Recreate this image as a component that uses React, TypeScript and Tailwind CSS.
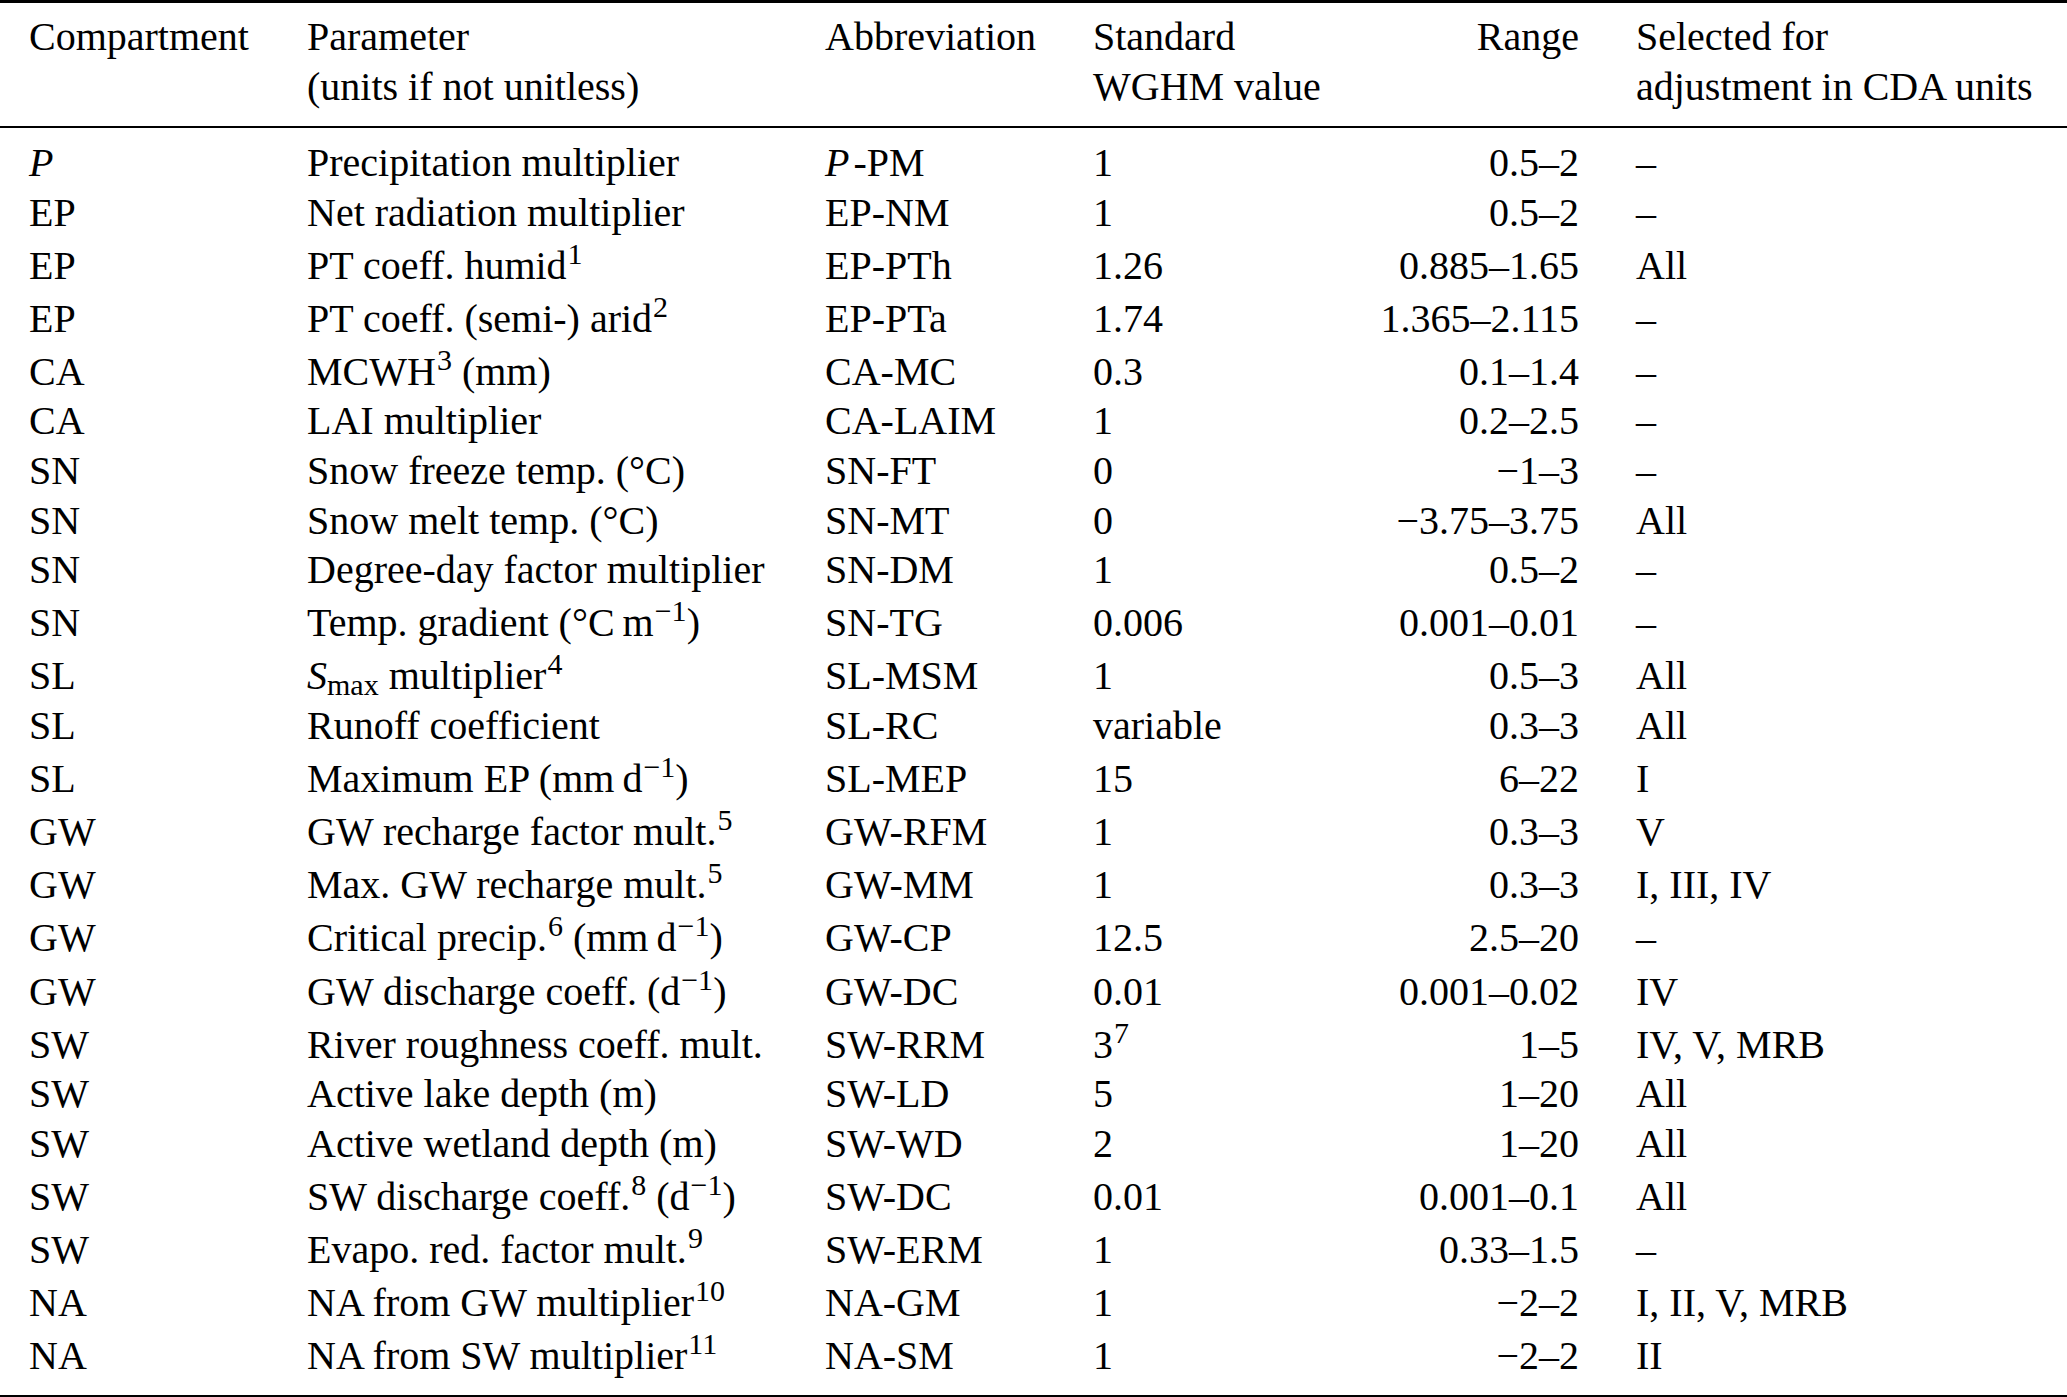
import type { ReactNode } from "react";

type Row = {
  compartment: ReactNode;
  parameter: ReactNode;
  abbreviation: ReactNode;
  standard: ReactNode;
  range: string;
  selected: string;
  tall?: boolean;
};

const cols = "grid grid-cols-[278px_518px_268px_250px_293px_1fr]";

function Sup({ children }: { children: ReactNode }) {
  return <sup className="-top-[15px] pl-[1px] text-[30px]">{children}</sup>;
}

function PerDay() {
  return (
    <>
      (mm{"\u2009"}d<Sup>−1</Sup>)
    </>
  );
}

const rows: Row[] = [
  {
    compartment: <i>P</i>,
    parameter: "Precipitation multiplier",
    abbreviation: (
      <>
        <i className="pr-[4px]">P</i>-PM
      </>
    ),
    standard: "1",
    range: "0.5–2",
    selected: "–"
  },
  { compartment: "EP", parameter: "Net radiation multiplier", abbreviation: "EP-NM", standard: "1", range: "0.5–2", selected: "–" },
  {
    compartment: "EP",
    parameter: (
      <>
        PT coeff. humid<Sup>1</Sup>
      </>
    ),
    abbreviation: "EP-PTh",
    standard: "1.26",
    range: "0.885–1.65",
    selected: "All",
    tall: true
  },
  {
    compartment: "EP",
    parameter: (
      <>
        PT coeff. (semi-) arid<Sup>2</Sup>
      </>
    ),
    abbreviation: "EP-PTa",
    standard: "1.74",
    range: "1.365–2.115",
    selected: "–",
    tall: true
  },
  {
    compartment: "CA",
    parameter: (
      <>
        MCWH<Sup>3</Sup> (mm)
      </>
    ),
    abbreviation: "CA-MC",
    standard: "0.3",
    range: "0.1–1.4",
    selected: "–",
    tall: true
  },
  { compartment: "CA", parameter: "LAI multiplier", abbreviation: "CA-LAIM", standard: "1", range: "0.2–2.5", selected: "–" },
  { compartment: "SN", parameter: "Snow freeze temp. (°C)", abbreviation: "SN-FT", standard: "0", range: "−1–3", selected: "–" },
  { compartment: "SN", parameter: "Snow melt temp. (°C)", abbreviation: "SN-MT", standard: "0", range: "−3.75–3.75", selected: "All" },
  { compartment: "SN", parameter: "Degree-day factor multiplier", abbreviation: "SN-DM", standard: "1", range: "0.5–2", selected: "–" },
  {
    compartment: "SN",
    parameter: (
      <>
        Temp. gradient (°C{"\u2009"}m<Sup>−1</Sup>)
      </>
    ),
    abbreviation: "SN-TG",
    standard: "0.006",
    range: "0.001–0.01",
    selected: "–",
    tall: true
  },
  {
    compartment: "SL",
    parameter: (
      <>
        <i>S</i>
        <sub className="-bottom-[6px] text-[30px]">max</sub> multiplier<Sup>4</Sup>
      </>
    ),
    abbreviation: "SL-MSM",
    standard: "1",
    range: "0.5–3",
    selected: "All",
    tall: true
  },
  { compartment: "SL", parameter: "Runoff coefficient", abbreviation: "SL-RC", standard: "variable", range: "0.3–3", selected: "All" },
  {
    compartment: "SL",
    parameter: (
      <>
        Maximum EP <PerDay />
      </>
    ),
    abbreviation: "SL-MEP",
    standard: "15",
    range: "6–22",
    selected: "I",
    tall: true
  },
  {
    compartment: "GW",
    parameter: (
      <>
        GW recharge factor mult.<Sup>5</Sup>
      </>
    ),
    abbreviation: "GW-RFM",
    standard: "1",
    range: "0.3–3",
    selected: "V",
    tall: true
  },
  {
    compartment: "GW",
    parameter: (
      <>
        Max. GW recharge mult.<Sup>5</Sup>
      </>
    ),
    abbreviation: "GW-MM",
    standard: "1",
    range: "0.3–3",
    selected: "I, III, IV",
    tall: true
  },
  {
    compartment: "GW",
    parameter: (
      <>
        Critical precip.<Sup>6</Sup> <PerDay />
      </>
    ),
    abbreviation: "GW-CP",
    standard: "12.5",
    range: "2.5–20",
    selected: "–",
    tall: true
  },
  {
    compartment: "GW",
    parameter: (
      <>
        GW discharge coeff. (d<Sup>−1</Sup>)
      </>
    ),
    abbreviation: "GW-DC",
    standard: "0.01",
    range: "0.001–0.02",
    selected: "IV",
    tall: true
  },
  {
    compartment: "SW",
    parameter: "River roughness coeff. mult.",
    abbreviation: "SW-RRM",
    standard: (
      <>
        3<Sup>7</Sup>
      </>
    ),
    range: "1–5",
    selected: "IV, V, MRB",
    tall: true
  },
  { compartment: "SW", parameter: "Active lake depth (m)", abbreviation: "SW-LD", standard: "5", range: "1–20", selected: "All" },
  { compartment: "SW", parameter: "Active wetland depth (m)", abbreviation: "SW-WD", standard: "2", range: "1–20", selected: "All" },
  {
    compartment: "SW",
    parameter: (
      <>
        SW discharge coeff.<Sup>8</Sup> (d<Sup>−1</Sup>)
      </>
    ),
    abbreviation: "SW-DC",
    standard: "0.01",
    range: "0.001–0.1",
    selected: "All",
    tall: true
  },
  {
    compartment: "SW",
    parameter: (
      <>
        Evapo. red. factor mult.<Sup>9</Sup>
      </>
    ),
    abbreviation: "SW-ERM",
    standard: "1",
    range: "0.33–1.5",
    selected: "–",
    tall: true
  },
  {
    compartment: "NA",
    parameter: (
      <>
        NA from GW multiplier<Sup>10</Sup>
      </>
    ),
    abbreviation: "NA-GM",
    standard: "1",
    range: "−2–2",
    selected: "I, II, V, MRB",
    tall: true
  },
  {
    compartment: "NA",
    parameter: (
      <>
        NA from SW multiplier<Sup>11</Sup>
      </>
    ),
    abbreviation: "NA-SM",
    standard: "1",
    range: "−2–2",
    selected: "II",
    tall: true
  }
];

export default function App() {
  return (
    <div className="h-[1397px] w-full overflow-hidden bg-white font-['Liberation_Serif',serif] text-[40px] text-black">
      <div className="h-[3px] bg-black" />

      <div className={`${cols} pl-[29px] pt-[9px] pb-[14px] leading-[50px] whitespace-nowrap`}>
        <div>Compartment</div>
        <div>
          Parameter
          <br />
          (units if not unitless)
        </div>
        <div>Abbreviation</div>
        <div>
          Standard
          <br />
          WGHM value
        </div>
        <div className="pr-[57px] text-right">Range</div>
        <div>
          Selected for
          <br />
          adjustment in CDA units
        </div>
      </div>

      <div className="h-[2px] bg-black" />

      <div className="pt-[10px] pb-[14px]">
        {rows.map((row, index) => (
          <div
            key={index}
            className={`${cols} pl-[29px] leading-[49.6px] whitespace-nowrap ${row.tall ? "pt-[3.5px]" : ""}`}
          >
            <div>{row.compartment}</div>
            <div>{row.parameter}</div>
            <div>{row.abbreviation}</div>
            <div>{row.standard}</div>
            <div className="pr-[57px] text-right">{row.range}</div>
            <div>{row.selected}</div>
          </div>
        ))}
      </div>

      <div className="h-[3px] bg-black" />
    </div>
  );
}
